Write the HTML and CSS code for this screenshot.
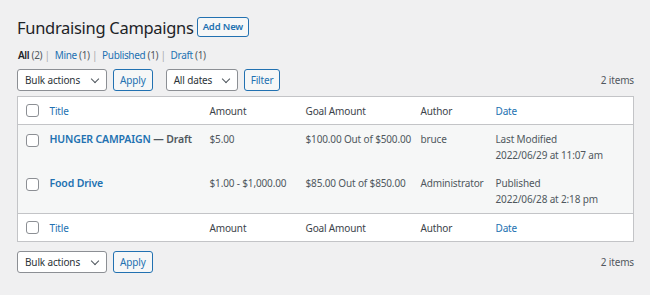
FILE: index.html
```html
<!DOCTYPE html>
<html lang="en">
<head>
    <meta charset="UTF-8">
    <meta name="viewport" content="width=device-width, initial-scale=1.0">
    <title>Fundraising Campaigns</title>
    <link rel="stylesheet" href="styles.css">
</head>
<body>
<div class="wrap">
    <div class="page-head">
        <h1>Fundraising Campaigns</h1>
        <a class="add-new" href="#">Add New</a>
    </div>

    <ul class="subsubsub">
        <li><a class="current" href="#">All <span class="count">(2)</span></a> |</li>
        <li><a href="#">Mine <span class="count">(1)</span></a> |</li>
        <li><a href="#">Published <span class="count">(1)</span></a> |</li>
        <li><a href="#">Draft <span class="count">(1)</span></a></li>
    </ul>

    <div class="tablenav">
        <div class="actions">
            <div class="select bulk">Bulk actions <span class="chev"></span></div>
            <button class="btn">Apply</button>
        </div>
        <div class="actions">
            <div class="select dates">All dates <span class="chev"></span></div>
            <button class="btn">Filter</button>
        </div>
        <div class="num-items">2 items</div>
    </div>

    <table class="list-table">
        <colgroup>
            <col class="c-cb">
            <col class="c-title">
            <col class="c-amount">
            <col class="c-goal">
            <col class="c-author">
            <col class="c-date">
        </colgroup>
        <thead>
        <tr>
            <th class="cb"><span class="checkbox"></span></th>
            <th><a href="#">Title</a></th>
            <th>Amount</th>
            <th>Goal Amount</th>
            <th>Author</th>
            <th><a href="#">Date</a></th>
        </tr>
        </thead>
        <tbody>
        <tr>
            <td class="cb"><span class="checkbox"></span></td>
            <td><strong><a href="#">HUNGER CAMPAIGN</a> — Draft</strong></td>
            <td>$5.00</td>
            <td>$100.00 Out of $500.00</td>
            <td>bruce</td>
            <td>Last Modified<br>2022/06/29 at 11:07 am</td>
        </tr>
        <tr>
            <td class="cb"><span class="checkbox"></span></td>
            <td><strong><a href="#">Food Drive</a></strong></td>
            <td>$1.00 - $1,000.00</td>
            <td>$85.00 Out of $850.00</td>
            <td>Administrator</td>
            <td>Published<br>2022/06/28 at 2:18 pm</td>
        </tr>
        </tbody>
        <tfoot>
        <tr>
            <th class="cb"><span class="checkbox"></span></th>
            <th><a href="#">Title</a></th>
            <th>Amount</th>
            <th>Goal Amount</th>
            <th>Author</th>
            <th><a href="#">Date</a></th>
        </tr>
        </tfoot>
    </table>

    <div class="tablenav bottom">
        <div class="actions">
            <div class="select bulk">Bulk actions <span class="chev"></span></div>
            <button class="btn">Apply</button>
        </div>
        <div class="num-items">2 items</div>
    </div>
</div>
</body>
</html>
```

FILE: styles.css
```css
body {
    font-family: "Noto Sans", "Open Sans", sans-serif;
    font-size: 10px;
    letter-spacing: -0.15px;
    background-color: #f0f0f1;
    color: #3c434a;
    margin: 0;
    padding: 0;
}
a {
    color: #2271b1;
    text-decoration: none;
}
.wrap {
    padding: 13px 16px 0 17px;
}
.page-head {
    display: flex;
    align-items: center;
    height: 28px;
}
.page-head h1 {
    font-size: 16.5px;
    font-weight: 400;
    letter-spacing: -0.3px;
    color: #1d2327;
    margin: 0 3px 0 0;
}
.add-new {
    display: inline-block;
    border: 1px solid #2271b1;
    border-radius: 3px;
    background: #f6f7f7;
    font-weight: 600;
    font-size: 9.5px;
    line-height: 18px;
    padding: 0 5px;
}
.subsubsub {
    list-style: none;
    margin: 6px 0 0 1px;
    padding: 0;
    display: flex;
    gap: 5px;
    color: #a7aaad;
    line-height: 16px;
    letter-spacing: -0.35px;
}
.subsubsub a .count {
    color: #50575e;
}
.subsubsub a.current {
    color: #1d2327;
    font-weight: 600;
}
.subsubsub a.current .count {
    font-weight: 400;
}
.tablenav {
    display: flex;
    align-items: center;
    gap: 13px;
    margin: 6px 0 5px;
    height: 22px;
}
.tablenav.bottom {
    margin-top: 9px;
}
.actions {
    display: flex;
    gap: 6px;
}
.select {
    display: flex;
    align-items: center;
    justify-content: space-between;
    box-sizing: border-box;
    height: 22px;
    padding: 0 8px 0 7px;
    background: #fff;
    border: 1px solid #8c8f94;
    border-radius: 3px;
    color: #2c3338;
}
.select.bulk {
    width: 90px;
}
.select.dates {
    width: 72px;
}
.chev {
    width: 5px;
    height: 5px;
    border-right: 1.3px solid #50575e;
    border-bottom: 1.3px solid #50575e;
    transform: rotate(45deg);
    margin-top: -3px;
}
.btn {
    font-family: inherit;
    font-size: 10px;
    letter-spacing: -0.15px;
    box-sizing: border-box;
    height: 22px;
    padding: 0 6px;
    border: 1px solid #2271b1;
    border-radius: 3px;
    background: #f6f7f7;
    color: #2271b1;
}
.num-items {
    margin-left: auto;
    color: #50575e;
}
.list-table {
    width: 100%;
    table-layout: fixed;
    border-collapse: collapse;
    background: #fff;
    border: 1px solid #c3c4c7;
}
.c-cb { width: 24px; }
.c-title { width: 160px; }
.c-amount { width: 96px; }
.c-goal { width: 115px; }
.c-author { width: 75px; }
.list-table th {
    text-align: left;
    font-weight: 400;
    color: #3c434a;
    height: 27px;
    padding: 0 8px;
}
.list-table thead tr {
    border-bottom: 1px solid #c3c4c7;
}
.list-table tfoot tr {
    border-top: 1px solid #c3c4c7;
}
.list-table tbody tr {
    background: #f6f7f7;
}
.list-table td {
    vertical-align: top;
    padding: 6px 8px 0;
    height: 38px;
    line-height: 16px;
    color: #50575e;
    white-space: nowrap;
}
.list-table td strong {
    font-weight: 600;
    color: #50575e;
    font-size: 10.5px;
}
.list-table .cb {
    padding: 0 0 0 8px;
}
.list-table td.cb {
    padding-top: 9px;
    height: 35px;
}
.checkbox {
    display: block;
    box-sizing: border-box;
    width: 13px;
    height: 13px;
    border: 1px solid #8c8f94;
    border-radius: 3px;
    background: #fff;
}
```
